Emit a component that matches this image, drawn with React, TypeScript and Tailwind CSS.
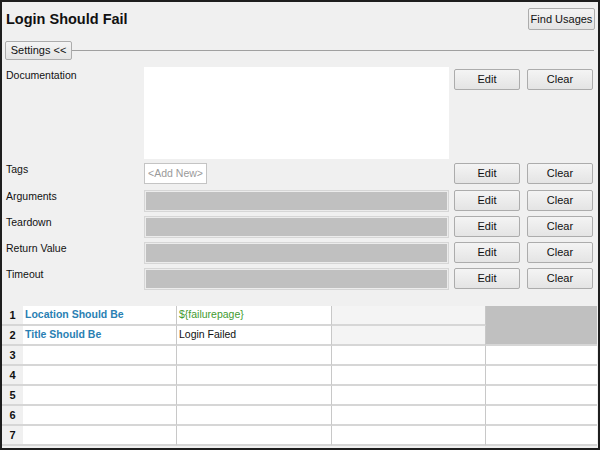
const btn =
  'flex items-center justify-center border border-[#acacac] rounded-[2px] bg-gradient-to-b from-[#f4f4f4] to-[#e4e4e4] text-[#111] text-[11px]'

function Btn({ label, className }: { label: string; className: string }) {
  return <div className={`${btn} ${className}`}>{label}</div>
}

function ButtonPair({ top }: { top: string }) {
  return (
    <div className={`flex gap-[7px] ${top}`}>
      <Btn label="Edit" className="w-[66px] h-[21px]" />
      <Btn label="Clear" className="w-[66px] h-[21px]" />
    </div>
  )
}

const settingRows = ['Arguments', 'Teardown', 'Return Value', 'Timeout']

interface GridRow {
  keyword?: string
  arg?: string
  argColor?: string
}

const gridRows: GridRow[] = [
  { keyword: 'Location Should Be', arg: '${failurepage}', argColor: 'text-[#3f9b2f]' },
  { keyword: 'Title Should Be', arg: 'Login Failed', argColor: 'text-[#111]' },
  {},
  {},
  {},
  {},
  {},
]

export default function App() {
  return (
    <div className="w-[600px] h-[450px] bg-[#f0f0f0] border-2 border-[#1e1e1e] flex flex-col font-['Liberation_Sans',Arial,sans-serif] text-[10.5px] text-[#111] overflow-hidden">
      {/* header */}
      <div className="flex items-start justify-between pl-[4px] pr-[4px] pt-[6px]">
        <h1 className="text-[14.5px] font-bold leading-none mt-[4px]">Login Should Fail</h1>
        <Btn label="Find Usages" className="w-[67px] h-[22px] -mr-[1px]" />
      </div>

      {/* settings toggle */}
      <div className="flex items-center mt-[11px] pl-[3px] pr-[4px] h-[19px]">
        <Btn label="Settings <<" className="w-[67px] h-[19px]" />
        <div className="flex-1 h-px bg-[#a0a0a0]" />
      </div>

      {/* documentation */}
      <div className="flex mt-[7px] pl-[4px]">
        <div className="w-[138px] pt-[1px]">Documentation</div>
        <div className="w-[305px] h-[92px] bg-white" />
        <ButtonPair top="ml-[5px] mt-[2px]" />
      </div>

      {/* tags */}
      <div className="flex mt-[4px] pl-[4px] h-[21px]">
        <div className="w-[138px] -mt-[1px]">Tags</div>
        <div className="w-[305px]">
          <div className="w-[63px] h-[21px] bg-white border border-[#c4c4c4] flex items-center justify-center text-[#9a9a9a]">
            &lt;Add New&gt;
          </div>
        </div>
        <ButtonPair top="ml-[5px]" />
      </div>

      {settingRows.map((label, i) => (
        <div key={label} className={`flex pl-[4px] h-[21px] ${i === 0 ? 'mt-[6px]' : 'mt-[5px]'}`}>
          <div className="w-[138px] -mt-[1px]">{label}</div>
          <div className="w-[305px] h-[22px] bg-[#c0c0c0] border border-[#d6d6d6] shadow-[inset_0_0_0_1px_#ececec]" />
          <ButtonPair top="ml-[5px]" />
        </div>
      ))}

      {/* keyword table */}
      <div className="mt-[17px] flex flex-col pr-[1px]">
        {gridRows.map((r, i) => (
          <div key={i} className="flex h-[20px]">
            <div className="w-[21px] bg-[#f0f0f0] border-b-2 border-[#d6d6d6] flex items-center justify-center font-bold text-[11px]">
              {i + 1}
            </div>
            <div className="w-[154px] bg-white border-b-2 border-r border-[#d6d6d6] border-r-[#c8c8c8] flex items-center pl-[2px] font-bold text-[#2a7fb3]">
              {r.keyword}
            </div>
            <div className={`w-[155px] bg-white border-b-2 border-r border-[#d6d6d6] border-r-[#c8c8c8] flex items-center pl-[2px] ${r.argColor ?? ''}`}>
              {r.arg}
            </div>
            <div className={`w-[154px] border-b-2 border-r border-[#d6d6d6] border-r-[#c8c8c8] ${i < 2 ? 'bg-[#f4f4f4]' : 'bg-white'}`} />
            <div
              className={`flex-1 ${
                i === 0 ? 'bg-[#c0c0c0]' : i === 1 ? 'bg-[#c0c0c0] border-b-2 border-[#d6d6d6]' : 'bg-white border-b-2 border-[#d6d6d6]'
              }`}
            />
          </div>
        ))}
      </div>
    </div>
  )
}
